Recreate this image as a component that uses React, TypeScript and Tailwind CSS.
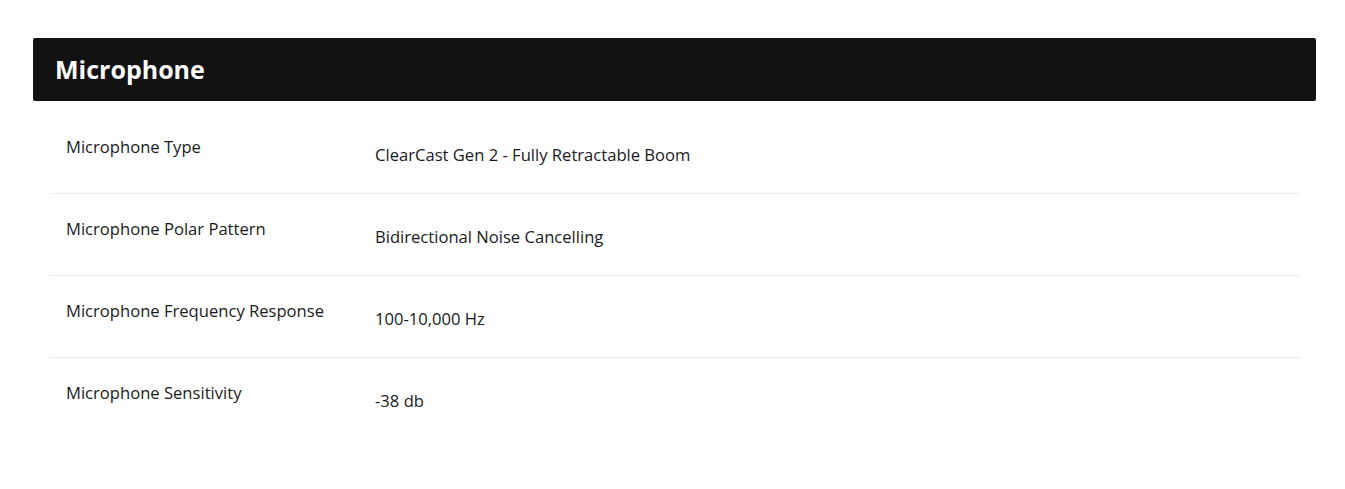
export default function App() {
  const rows = [
    ["Microphone Type", "ClearCast Gen 2 - Fully Retractable Boom"],
    ["Microphone Polar Pattern", "Bidirectional Noise Cancelling"],
    ["Microphone Frequency Response", "100-10,000 Hz"],
    ["Microphone Sensitivity", "-38 db"],
  ];
  return (
    <div
      className="w-[1345px] h-[489px] bg-white pt-[38px] pl-[33px] pr-[29px]"
      style={{ fontFamily: '"Open Sans", "Noto Sans", sans-serif' }}
    >
      <div className="h-[63px] bg-[#121212] rounded-[2px] flex items-center pl-[22px]">
        <h2 className="text-white font-bold text-[25px] leading-none">Microphone</h2>
      </div>
      <div className="mt-[11px] ml-[17px] mr-[16px]">
        {rows.map(([k, v], i) => (
          <div
            key={k}
            className={`flex items-start text-[16.6px] leading-[24px] text-[#1a1a1a] ${
              i < rows.length - 1 ? "border-b border-[#ececec]" : ""
            }`}
          >
            <div className="w-[309px] pl-[16px] pt-[23px]">{k}</div>
            <div className="pl-[16px] pt-[31px] pb-[26px]">{v}</div>
          </div>
        ))}
      </div>
    </div>
  );
}
